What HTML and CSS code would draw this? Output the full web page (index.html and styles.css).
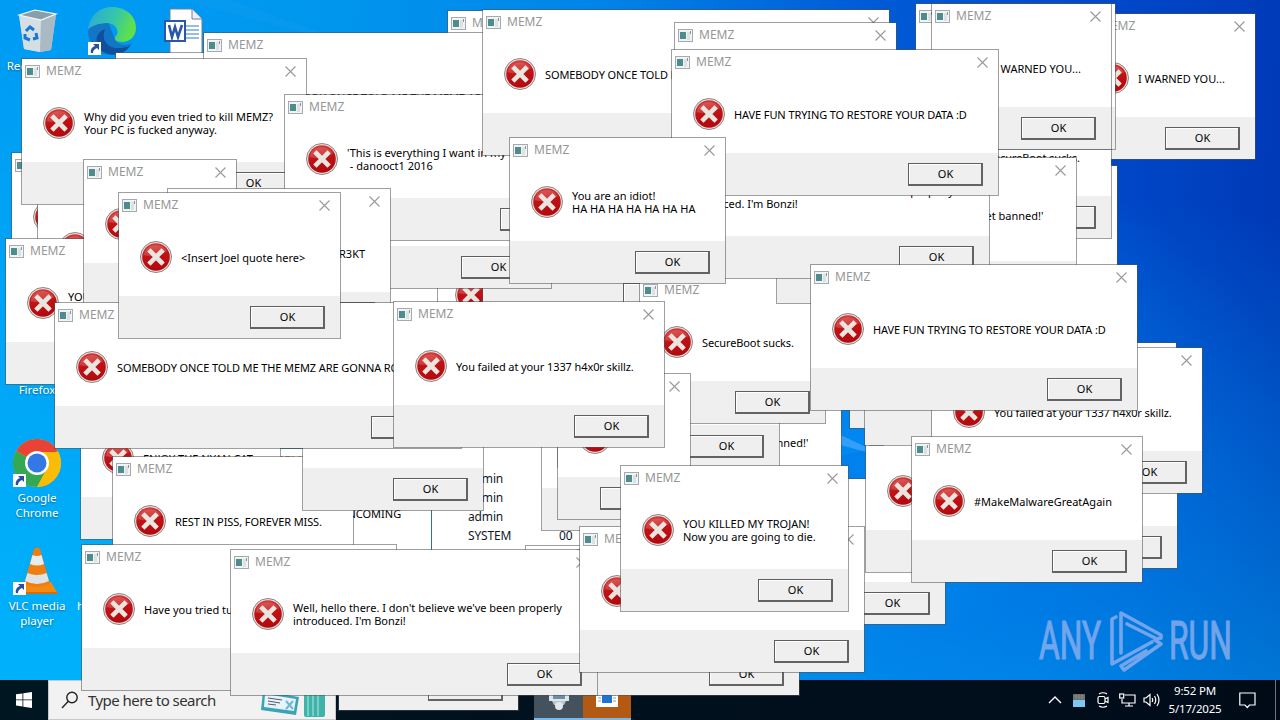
FILE: index.html
```html
<!DOCTYPE html>
<html lang="en">
<head>
    <meta charset="UTF-8">
    <meta name="viewport" content="width=device-width, initial-scale=1.0">
    <title>Desktop</title>
    <link rel="stylesheet" href="styles.css">
</head>
<body>
    <div class="desktop">
        <svg class="rays" width="1280" height="680" viewBox="0 0 1280 680">
            <path d="M180 0 L900 190 L900 240 L230 0 Z" fill="#fff" opacity=".025"/>
            <path d="M830 430 L866 447 L866 452 L830 442 Z" fill="#fff" opacity=".2"/>
            <path d="M830 458 L866 450 L866 490 L830 490 Z" fill="#0050d0" opacity=".15"/>
        </svg>

        <div class="shortcut bin">
            <svg width="48" height="48" viewBox="0 0 48 48">
                <path d="M6 7 L22 2 L43 6 L38 42 L27 44 L11 41 Z" fill="#c9d6de"/>
                <path d="M6 7 L28 12 L27 44 L11 41 Z" fill="#d3dee5"/>
                <path d="M28 12 L43 6 L38 42 L27 44 Z" fill="#a9bac5"/>
                <path d="M6 7 L22 2 L43 6 L28 12 Z" fill="#8a9dab" stroke="#f4f8fa" stroke-width="1.2"/>
                <g fill="none" stroke="#1976d2" stroke-width="3">
                    <path d="M13 23 L17 19 L21 22"/>
                    <path d="M23 25 L24 30 L20 31"/>
                    <path d="M17 32 L12 30 L12 26"/>
                </g>
            </svg>
            <span>Recycle Bin</span>
        </div>

        <div class="shortcut edge">
            <svg width="48" height="48" viewBox="0 0 48 48">
                <defs>
                    <linearGradient id="edgeTop" x1="0" y1="0" x2="1" y2="0.3">
                        <stop offset="0" stop-color="#2aa7dc"/>
                        <stop offset=".6" stop-color="#35c7a8"/>
                        <stop offset="1" stop-color="#5fe04a"/>
                    </linearGradient>
                </defs>
                <path d="M0 24 A24 24 0 0 0 24 48 C34 48 41 43 44 36 C38 40 28 38 26 30 L20 14 L4 16 Z" fill="#1276c4"/>
                <path d="M0 22 C2 8 12 0 24 0 C38 0 48 9 48 21 C48 30 41 35 34 35 C28 35 25 32 28 29 C32 25 28 16 19 16 C10 16 3 20 0 22 Z" fill="url(#edgeTop)"/>
                <path d="M17 22 C12 34 21 46 42 39 C34 50 18 50 11 41 C6 33 9 25 17 22 Z" fill="#0f4f9e"/>
            </svg>
            <svg class="arrow" width="13" height="13" viewBox="0 0 13 13"><rect width="13" height="13" fill="#fff"/><path d="M5 2 H11 V8 L9 6 C6 7 5 9 5 11 H3 C2 8 4 5 7 4 Z" fill="#2b4f9e"/></svg>
        </div>

        <div class="shortcut word">
            <svg width="40" height="48" viewBox="0 0 40 48">
                <path d="M6 1 H28 L38 11 V46 H6 Z" fill="#fff" stroke="#6c7f94"/>
                <path d="M28 1 V11 H38" fill="#eef" stroke="#6c7f94"/>
                <path d="M22 18 H35 M22 22 H35 M22 26 H35 M22 30 H35" stroke="#2b7cd3"/>
                <rect x="1" y="13" width="20" height="20" fill="#fff" stroke="#2b57a7" stroke-width="2"/>
                <path d="M5 17 L8 29 L11 19 L14 29 L18 17" fill="none" stroke="#2b57a7" stroke-width="2.6"/>
            </svg>
        </div>

        <div class="shortcut firefox">
            <svg width="20" height="12" viewBox="0 0 20 12"><path d="M0 8 C2 2 12 0 20 2 V12 H0 Z" fill="#f2c9b8"/></svg>
            <span>Firefox</span>
        </div>

        <div class="shortcut chrome">
            <svg width="48" height="48" viewBox="0 0 48 48">
                <circle cx="24" cy="24" r="24" fill="#fbbc05"/>
                <path d="M24 24 L3.2 12 A24 24 0 0 1 44.8 12 Z" fill="#ea4335"/>
                <path d="M24 24 L3.2 12 A24 24 0 0 0 24 48 L34.4 30 Z" fill="#34a853"/>
                <path d="M24 13 H45.3 A24 24 0 0 1 24 48 L34 29 Z" fill="#fbbc05"/>
                <circle cx="24" cy="24" r="12" fill="#fff"/>
                <circle cx="24" cy="24" r="9.5" fill="#3478e5"/>
            </svg>
            <svg class="arrow" width="13" height="13" viewBox="0 0 13 13"><rect width="13" height="13" fill="#fff"/><path d="M5 2 H11 V8 L9 6 C6 7 5 9 5 11 H3 C2 8 4 5 7 4 Z" fill="#2b4f9e"/></svg>
            <span>Google<br>Chrome</span>
        </div>

        <div class="shortcut vlc">
            <svg width="48" height="48" viewBox="0 0 48 48">
                <path d="M10 35 H38 L45 47 H3 Z" fill="#f58a12"/>
                <path d="M3 45 H45 V47 H3 Z" fill="#d96c05"/>
                <path d="M21 2 Q24 -1 27 2 L37 37 Q24 43 11 37 Z" fill="#f07d10"/>
                <path d="M19.500 8 Q24 10 28.500 8 L31 17 Q24 20 17 17 Z" fill="#e9ecee"/>
                <path d="M14.500 26 Q24 30 33.500 26 L36 34 Q24 40 12 34 Z" fill="#dfe3e6"/>
            </svg>
            <svg class="arrow" width="13" height="13" viewBox="0 0 13 13"><rect width="13" height="13" fill="#fff"/><path d="M5 2 H11 V8 L9 6 C6 7 5 9 5 11 H3 C2 8 4 5 7 4 Z" fill="#2b4f9e"/></svg>
            <span>VLC media<br>player</span>
        </div>
        <span class="stray-label">h</span>

        <div class="watermark">
            <span>ANY</span>
            <svg width="56" height="64" viewBox="0 0 56 64" fill="none" stroke="#8fb0ee" stroke-width="3.6" stroke-linejoin="round" stroke-linecap="round">
                <path d="M13 44 V4 L53 26 V29 L49 30 L19 15"/>
                <path d="M8 8 L4 10 V55 L44 33"/>
                <path d="M47 31 L53 35 L16 61 L13 57 L38 42"/>
            </svg>
            <span>RUN</span>
        </div>
    </div>

    <div class="taskbar">
        <div class="start">
            <svg width="16" height="16" viewBox="0 0 16 16" fill="#fff"><path d="M0 2.300 L6.500 1.400 V7.500 H0 Z M7.300 1.300 L16 0 V7.500 H7.300 Z M0 8.300 H6.500 V14.500 L0 13.600 Z M7.300 8.300 H16 V16 L7.300 14.700 Z"/></svg>
        </div>
        <div class="search">
            <svg width="18" height="18" viewBox="0 0 18 18" fill="none" stroke="#222" stroke-width="1.400"><circle cx="11" cy="6.500" r="5.200"/><path d="M7.300 10.200 L1 17"/></svg>
            <span>Type here to search</span>
            <svg class="travel" width="68" height="38" viewBox="0 0 68 38">
                <path d="M3 10 L39 16 L36 34 L1 29 Z" fill="#3aa3b8"/>
                <path d="M5 13 L36 18 L34 30 L4 26 Z" fill="#e8f4f8"/>
                <path d="M8 17 L22 19 M8 20 L20 22 M8 23 L16 24" stroke="#557" stroke-width="1"/>
                <path d="M26 20 L33 28 M33 20 L26 28" stroke="#6fb6dc" stroke-width="2"/>
                <rect x="44" y="12" width="21" height="24" rx="2" fill="#3fb3a8"/>
                <path d="M48 13 V35 M53 13 V35 M58 13 V35" stroke="#8fd8d0" stroke-width="1.500"/>
                <path d="M50 12 V5 H59 V12" fill="none" stroke="#777" stroke-width="2"/>
            </svg>
        </div>
        <div class="pinned"></div>
        <div class="app app-grey">
            <svg width="24" height="24" viewBox="0 0 24 24"><rect x="2" y="1" width="20" height="13" fill="#dfe6ea"/><rect x="6" y="3" width="12" height="9" fill="#6d8ea6"/><path d="M5 14 H19 L17 18 H7 Z" fill="#b9c4cb"/><circle cx="12" cy="19" r="4" fill="#e3e8ea"/></svg>
        </div>
        <div class="app app-orange">
            <svg width="22" height="22" viewBox="0 0 22 22"><rect y="1" width="22" height="18" fill="#fff"/><rect x="6" y="5" width="10" height="10" fill="#1c74d8"/><path d="M2 7 H5 M2 10 H5 M2 13 H5 M17 7 H20 M17 10 H20 M17 13 H20" stroke="#999"/></svg>
        </div>
        <div class="tray">
            <svg width="14" height="8" viewBox="0 0 14 8" fill="none" stroke="#fff" stroke-width="1.400"><path d="M1 7 L7 1 L13 7"/></svg>
            <svg width="12" height="13" viewBox="0 0 12 13"><rect width="12" height="13" fill="#7cc8f4"/><rect width="12" height="6" fill="#596a70"/><path d="M0 2 H12 M0 4 H12 M3 0 V6 M6 0 V6 M9 0 V6" stroke="#b09878" stroke-width=".5"/></svg>
            <svg width="12" height="16" viewBox="0 0 12 16" fill="none" stroke="#fff" stroke-width="1.200"><rect x="1" y="4.500" width="7" height="7" rx="1.500"/><path d="M8 7 L11 5.500 V10.500 L8 9 M2 2 Q6 -.5 10 2 M2 14 Q6 16.500 10 14"/></svg>
            <svg width="17" height="14" viewBox="0 0 17 14" fill="none" stroke="#fff" stroke-width="1.200"><path d="M5.500 2 H16 V10 H3 V6 M10 10 V13 M6 13 H14"/><rect x=".7" y="1" width="4" height="4"/></svg>
            <svg width="17" height="14" viewBox="0 0 17 14" fill="none" stroke="#fff" stroke-width="1.200"><path d="M1 5 H3 L7 1.500 V12.500 L3 9 H1 Z M9 5 Q10.500 7 9 9 M11.500 3 Q14 7 11.500 11 M14 1 Q18 7 14 13"/></svg>
        </div>
        <div class="clock">
            <span>9:52 PM</span>
            <span>5/17/2025</span>
        </div>
        <svg class="notify" width="17" height="17" viewBox="0 0 17 17" fill="none" stroke="#fff" stroke-width="1.200"><path d="M.8 1 H16 V13 H10.500 L8.300 15.500 L6 13 H.8 Z"/></svg>
        <div class="show-desktop"></div>
    </div>

    <div class="tasks">
        <div class="row"><span>admin</span><span>00</span></div>
        <div class="row"><span>admin</span><span>00</span></div>
        <div class="row"><span>admin</span><span>00</span></div>
        <div class="row"><span>SYSTEM</span><span>00</span></div>
    </div>

    <div id="dialogs"></div>

    <template id="dialog">
        <div class="dialog">
            <div class="titlebar">
                <svg class="app-icon" width="15" height="13" viewBox="0 0 15 13"><rect x=".5" y=".5" width="14" height="12" fill="#f1f3f4" stroke="#a4abae"/><rect x="2" y="3" width="6" height="7" fill="#4b9088"/><rect x="2" y="3" width="3" height="7" fill="#5a7f9c" opacity=".5"/><rect x="9" y="3" width="3" height="8" fill="#dde1e3"/><rect x="12" y="2" width="1" height="3" fill="#8b9499"/></svg>
                <span class="title">MEMZ</span>
                <svg class="close" width="11" height="11" viewBox="0 0 11 11"><path d="M.5 .5 L10.500 10.500 M10.500 .5 L.5 10.500" stroke="#999" stroke-width="1.100"/></svg>
            </div>
            <div class="content">
                <svg class="error" width="32" height="32" viewBox="0 0 32 32">
                    <circle cx="16" cy="16" r="15.500" fill="#e8dedd" stroke="#8f8582"/>
                    <circle cx="16" cy="16" r="13.800" fill="url(#red)"/>
                    <path d="M5 10 A13 13 0 0 1 27 10 Q17 18 3.500 14 Z" fill="#fff" opacity=".16"/>
                    <path d="M10.500 10.500 L21.500 21.500 M21.500 10.500 L10.500 21.500" stroke="#e9e6df" stroke-width="4.600" stroke-linecap="square"/>
                </svg>
                <div class="message"></div>
            </div>
            <div class="footer"><button>OK</button></div>
        </div>
    </template>
    <svg class="defs" width="0" height="0">
        <linearGradient id="red" x1="0" y1="0" x2="0.2" y2="1">
            <stop offset="0" stop-color="#d9433f"/>
            <stop offset=".5" stop-color="#c01316"/>
            <stop offset="1" stop-color="#b30a10"/>
        </linearGradient>
    </svg>
    <script src="script.js"></script>
</body>
</html>
```

FILE: styles.css
```css
body {
    margin: 0;
    width: 1280px;
    height: 720px;
    overflow: hidden;
    position: relative;
    font-family: "Noto Sans", "Open Sans", sans-serif;
}
.desktop {
    position: relative;
    height: 680px;
    background:
        radial-gradient(ellipse 420px 330px at 880px 470px, rgba(0, 150, 255, 0.7), rgba(0, 120, 235, 0.35) 50%, rgba(0, 90, 220, 0) 100%),
        linear-gradient(8deg, rgba(0, 190, 255, 0.65), rgba(0, 185, 255, 0) 75%),
        linear-gradient(95deg, #009cf4 0%, #0096ee 25%, #0084e8 45%, #005bd6 65%, #004acc 82%, #0036b2 100%);
}
.rays {
    position: absolute;
    left: 0;
    top: 0;
}
.shortcut {
    position: absolute;
    width: 74px;
    display: flex;
    flex-direction: column;
    align-items: center;
    text-align: center;
    color: #fff;
    font-size: 11.5px;
    line-height: 15px;
    text-shadow: 0 1px 2px rgba(0, 0, 0, 0.4);
}
.shortcut .arrow {
    position: absolute;
    left: 13px;
    top: 35px;
}
.bin { left: 0; top: 8px; }
.bin span { margin-top: 2px; white-space: nowrap; }
.edge { left: 75px; top: 7px; }
.word { left: 147px; top: 8px; }
.firefox { left: 0; top: 143px; }
.firefox span { margin-top: 227px; }
.chrome { left: 0; top: 439px; }
.chrome span { margin-top: 3px; }
.vlc { left: 0; top: 547px; }
.vlc span { margin-top: 3px; }
.stray-label {
    position: absolute;
    left: 77px;
    top: 598px;
    color: #fff;
    font-size: 11.5px;
    line-height: 15px;
}
.watermark {
    position: absolute;
    left: 1039px;
    top: 608px;
    display: flex;
    align-items: center;
    gap: 5px;
    color: #8fb0ee;
    opacity: 0.8;
}
.watermark span {
    width: 64px;
    font-family: "Roboto", sans-serif;
    font-size: 53px;
    line-height: 66px;
    transform: scaleX(0.6);
    transform-origin: left center;
    -webkit-text-stroke: 1.2px #8fb0ee;
}

.taskbar {
    height: 40px;
    display: flex;
    align-items: center;
    background: linear-gradient(90deg, #001722, #01101d 50%, #000b18);
    color: #fff;
}
.start {
    width: 48px;
    display: flex;
    justify-content: center;
}
.search {
    width: 288px;
    height: 40px;
    box-sizing: border-box;
    display: flex;
    align-items: center;
    gap: 9px;
    padding-left: 12px;
    background: #f2f2f2;
    border: 1px solid #c8c8c8;
    color: #333;
    font-size: 15px;
    letter-spacing: -0.55px;
}
.search .travel {
    margin-left: auto;
    margin-right: 7px;
}
.pinned {
    width: 198px;
}
.app {
    width: 49px;
    height: 40px;
    box-sizing: border-box;
    display: flex;
    align-items: center;
    justify-content: center;
    border-bottom: 2px solid #76b9ed;
}
.app-grey { background: #44525e; }
.app-orange {
    width: 48px;
    background: #b25a14;
}
.tray {
    flex: 1;
    display: grid;
    grid-template-columns: repeat(5, 24px);
    justify-content: end;
    justify-items: center;
    align-items: center;
}
.clock {
    width: 64px;
    display: flex;
    flex-direction: column;
    align-items: center;
    font-size: 11.5px;
    line-height: 18px;
    letter-spacing: -0.2px;
}
.notify {
    margin-left: 12px;
    margin-right: 19px;
}
.show-desktop {
    width: 4px;
    height: 40px;
    border-left: 1px solid #6b7680;
}

.tasks {
    position: absolute;
    left: 432px;
    top: 440px;
    width: 200px;
    height: 120px;
    box-sizing: border-box;
    padding: 29px 0 0 36px;
    background: #fff;
    color: #101828;
    font-size: 12px;
    line-height: 19px;
    letter-spacing: -0.15px;
}
.tasks .row {
    display: flex;
}
.tasks .row span:first-child {
    width: 91px;
}

.dialog {
    position: absolute;
    height: 147px;
    box-sizing: border-box;
    display: flex;
    flex-direction: column;
    background: #fff;
    background-clip: padding-box;
    border: 1px solid rgba(80, 80, 80, 0.55);
}
.titlebar {
    height: 24px;
    display: flex;
    align-items: center;
    padding: 0 10px 0 3px;
}
.title {
    flex: 1;
    margin-left: 6px;
    font-size: 12px;
    line-height: 16px;
    color: #969696;
}
.content {
    height: 79px;
    box-sizing: border-box;
    display: flex;
    align-items: center;
    padding: 1px 0 0 21px;
}
.error {
    flex: none;
}
.message {
    margin-left: 9px;
    font-size: 11px;
    line-height: 13px;
    white-space: pre;
    color: #000;
}
.message.tight {
    letter-spacing: -0.1px;
}
.footer {
    flex: 1;
    background: #efefef;
    background-clip: padding-box;
    display: flex;
    justify-content: flex-end;
    align-items: flex-start;
    padding: 10px 15px 0 0;
}
.footer button {
    width: 75px;
    height: 23px;
    padding: 0 0 0 1px;
    background: #efefef;
    border: 1px solid #5e5e5e;
    border-right: 2px solid #636363;
    border-bottom: 2px solid #636363;
    box-shadow: inset 1px 1px 0 #fff;
    font-family: inherit;
    font-size: 11px;
    line-height: 18px;
    color: #000;
}
.defs {
    position: absolute;
}
```

FILE: script.js
```js
const text = {
    somebody: "SOMEBODY ONCE TOLD ME THE MEMZ ARE GONNA ROLL ME",
    restore: "HAVE FUN TRYING TO RESTORE YOUR DATA :D",
    rest: "REST IN PISS, FOREVER MISS.",
    warned: "I WARNED YOU...",
    secure: "SecureBoot sucks.",
    banned: "'Uh, Club Penguin. Time to get banned!'\n - danooct1 2016",
    bonzi: "Well, hello there. I don't believe we've been properly\nintroduced. I'm Bonzi!",
    failed: "You failed at your 1337 h4x0r skillz.",
    great: "#MakeMalwareGreatAgain",
    why: "Why did you even tried to kill MEMZ?\nYour PC is fucked anyway.",
    killed: "YOU KILLED MY TROJAN!\nNow you are going to die.",
    joel: "<Insert Joel quote here>",
    nyan: "ENJOY THE NYAN CAT"
};
const tight = [text.somebody, text.restore, text.rest, text.failed, text.secure];

// x, y, width, message - from back to front
const dialogs = [
    [447, 10, 223, ""],
    [115, 52, 223, ""],
    [203, 32, 408, text.somebody],
    [11, 152, 154, ""],
    [37, 183, 201, ""],
    [21, 58, 286, text.why],
    [433, 230, 222, ""],
    [256, 245, 182, ""],
    [482, 169, 232, ""],
    [329, 142, 223, ""],
    [284, 94, 307, "'This is everything I want in my computer'\n - danooct1 2016"],
    [5, 238, 229, text.killed],
    [83, 159, 154, ""],
    [167, 188, 224, "HAHA N00B L2P G3T R3KT"],
    [895, 165, 223, ""],
    [1075, 13, 181, text.warned],
    [925, 92, 187, text.secure],
    [541, 384, 301, text.banned],
    [557, 321, 223, ""],
    [639, 277, 187, text.secure],
    [776, 157, 301, text.banned],
    [622, 132, 368, text.bonzi],
    [482, 9, 408, text.somebody],
    [674, 22, 223, ""],
    [915, 3, 201, ""],
    [931, 3, 181, text.warned],
    [671, 49, 328, text.restore],
    [248, 448, 184, "BSOD INCOMING"],
    [80, 393, 201, text.nyan],
    [509, 137, 217, "You are an idiot!\nHA HA HA HA HA HA HA"],
    [557, 373, 134, ""],
    [112, 456, 242, text.rest],
    [302, 364, 182, ""],
    [54, 302, 408, text.somebody],
    [118, 192, 223, text.joel],
    [393, 301, 272, text.failed],
    [849, 282, 223, ""],
    [954, 342, 223, ""],
    [717, 478, 229, ""],
    [955, 422, 223, ""],
    [865, 426, 201, ""],
    [864, 299, 223, ""],
    [931, 347, 272, text.failed],
    [810, 264, 328, text.restore],
    [911, 436, 232, text.great],
    [338, 564, 181, ""],
    [81, 544, 316, "Have you tried turning it off and on again?"],
    [525, 545, 229, ""],
    [577, 549, 223, ""],
    [230, 549, 368, text.bonzi],
    [579, 526, 286, ""],
    [620, 465, 229, text.killed]
];

const template = document.getElementById("dialog");
const container = document.getElementById("dialogs");

dialogs.forEach(([x, y, width, message]) => {
    const node = template.content.cloneNode(true);
    const dialog = node.querySelector(".dialog");
    const label = node.querySelector(".message");
    dialog.style.left = x + "px";
    dialog.style.top = y + "px";
    dialog.style.width = width + "px";
    label.textContent = message;
    label.classList.toggle("tight", tight.includes(message));
    container.appendChild(node);
});
```
